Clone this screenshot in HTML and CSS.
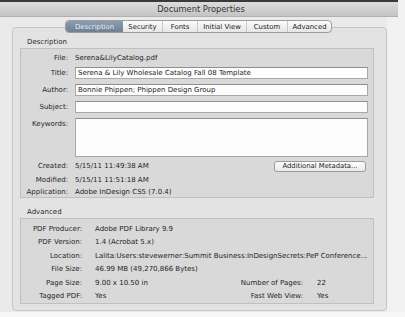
FILE: index.html
```html
<!DOCTYPE html>
<html>
<head>
<meta charset="utf-8">
<link rel="stylesheet" href="styles.css">
</head>
<body>
<div class="window">
  <div class="titlebar"><span class="title">Document Properties</span></div>
  <div class="content">
    <div class="tabview">
      <div class="tabs-row">
        <div class="tabs">
          <div class="tab selected w1">Description</div>
          <div class="tab w2 nosep">Security</div>
          <div class="tab w3">Fonts</div>
          <div class="tab w4">Initial View</div>
          <div class="tab w5">Custom</div>
          <div class="tab w6">Advanced</div>
        </div>
      </div>
      <div class="panel">
        <div class="group-label">Description</div>
        <div class="box desc">
          <div class="row r-file"><div class="lbl">File:</div><div class="val">Serena&amp;LilyCatalog.pdf</div></div>
          <div class="row r-field r-title"><div class="lbl">Title:</div><div class="field">Serena &amp; Lily Wholesale Catalog Fall 08 Template</div></div>
          <div class="row r-field"><div class="lbl">Author:</div><div class="field">Bonnie Phippen; Phippen Design Group</div></div>
          <div class="row r-field"><div class="lbl">Subject:</div><div class="field"></div></div>
          <div class="row r-kw"><div class="lbl">Keywords:</div><div class="field area"></div></div>
          <div class="row r-created"><div class="lbl">Created:</div><div class="val">5/15/11 11:49:38 AM</div><div class="button">Additional Metadata...</div></div>
          <div class="row r-mod"><div class="lbl">Modified:</div><div class="val">5/15/11 11:51:18 AM</div></div>
          <div class="row r-app"><div class="lbl">Application:</div><div class="val">Adobe InDesign CS5 (7.0.4)</div></div>
        </div>
        <div class="group-label adv-label">Advanced</div>
        <div class="box adv">
          <div class="arow"><div class="albl">PDF Producer:</div><div class="aval span">Adobe PDF Library 9.9</div></div>
          <div class="arow"><div class="albl">PDF Version:</div><div class="aval span">1.4 (Acrobat 5.x)</div></div>
          <div class="arow"><div class="albl">Location:</div><div class="aval span">Lalita:Users:stevewerner:Summit Business:InDesignSecrets:PeP Conference...</div></div>
          <div class="arow"><div class="albl">File Size:</div><div class="aval span">46.99 MB (49,270,866 Bytes)</div></div>
          <div class="arow"><div class="albl">Page Size:</div><div class="aval">9.00 x 10.50 in</div><div class="albl2">Number of Pages:</div><div class="aval2">22</div></div>
          <div class="arow"><div class="albl">Tagged PDF:</div><div class="aval">Yes</div><div class="albl2">Fast Web View:</div><div class="aval2">Yes</div></div>
        </div>
      </div>
    </div>
  </div>
</div>
</body>
</html>
```
FILE: styles.css
```css
* { box-sizing: border-box; }
html, body { margin: 0; padding: 0; }
body {
  width: 405px;
  height: 317px;
  overflow: hidden;
  background: #f7f7f7;
  font-family: "DejaVu Sans", "Liberation Sans", sans-serif;
  font-size: 7px;
  color: #1e1e1e;
}
.window {
  background: linear-gradient(to right, #eaeaea 0, #eaeaea 387px, #f1f1f1 387px);
  height: 312px;
}
.titlebar {
  height: 17px;
  border-top: 2px solid #3b3b33;
  background: linear-gradient(#dcdcdc, #c4c4c4);
  border-bottom: 1px solid #b0b0b0;
  display: flex;
  justify-content: center;
  align-items: center;
  margin-right: 7px;
}
.title {
  font-size: 8.3px;
  color: #333;
  padding-left: 4px;
}
.content { padding-top: 3px; }
.tabview { margin-left: 12px; width: 375px; }
.tabs-row { display: flex; padding-left: 53px; position: relative; z-index: 1; }
.tabs {
  display: flex;
  height: 13px;
  border: 1px solid #9c9c9c;
  border-radius: 4px;
  background: linear-gradient(#fbfbfb, #e6e6e6);
  overflow: hidden;
}
.tab {
  display: flex;
  align-items: center;
  justify-content: center;
  color: #222;
  border-left: 1px solid #c8c8c8;
  font-size: 6.9px;
}
.tab.nosep, .tab.selected { border-left: none; }
.tab.selected {
  background: linear-gradient(#8d9db0, #6f8095);
  color: #e8edf3;
}
.w1 { width: 57px; }
.w2 { width: 39px; }
.w3 { width: 35px; }
.w4 { width: 49px; }
.w5 { width: 41px; }
.w6 { width: 44px; }
.panel {
  margin-top: -6px;
  border: 1px solid #c6c6c6;
  border-radius: 4px;
  background: #e3e3e3;
  padding: 9px 12px 6px 7px;
}
.group-label {
  height: 10px;
  line-height: 10px;
  padding-left: 7px;
  margin-bottom: 1px;
  color: #2a2a2a;
}
.adv-label { margin-top: 9px; }
.box {
  border: 1px solid #c0c0c0;
  background: #d9d9d9;
  padding-right: 5px;
}
.desc { padding-top: 3px; height: 150px; }
.row {
  display: flex;
  align-items: center;
  column-gap: 7px;
}
.lbl { width: 47px; text-align: right; flex: none; color: #262626; }
.val { white-space: nowrap; }
.r-file { height: 12px; }
.r-field { height: 12px; margin-top: 5px; }
.r-title { margin-top: 3px; }
.r-kw { height: 39px; margin-top: 5px; align-items: flex-start; }
.r-kw .lbl { padding-top: 2px; }
.field {
  flex: 1;
  height: 12px;
  background: #fdfdfd;
  border: 1px solid #a8a8a8;
  border-top-color: #8e8e8e;
  padding-left: 2px;
  line-height: 10px;
  white-space: nowrap;
  overflow: hidden;
}
.field.area { height: 39px; }
.r-created { height: 10px; margin-top: 4px; }
.r-mod { height: 10px; margin-top: 4px; }
.r-app { height: 10px; margin-top: 2px; }
.button {
  margin-left: auto;
  margin-right: 2px;
  width: 92px;
  height: 11px;
  border: 1px solid #9a9a9a;
  border-radius: 3px;
  background: linear-gradient(#ffffff, #e9e9e9);
  display: flex;
  align-items: center;
  justify-content: center;
  font-size: 6.8px;
  color: #222;
}
.adv { padding-top: 3px; padding-right: 0; }
.arow {
  display: grid;
  grid-template-columns: 74px 1fr 88px 56px;
  height: 13.5px;
  align-items: center;
}
.albl { text-align: right; padding-right: 13px; color: #262626; white-space: nowrap; }
.aval { white-space: nowrap; }
.aval.span { grid-column: 2 / -1; }
.albl2 { text-align: right; padding-right: 14px; white-space: nowrap; color: #262626; }
.aval2 { white-space: nowrap; }
```
